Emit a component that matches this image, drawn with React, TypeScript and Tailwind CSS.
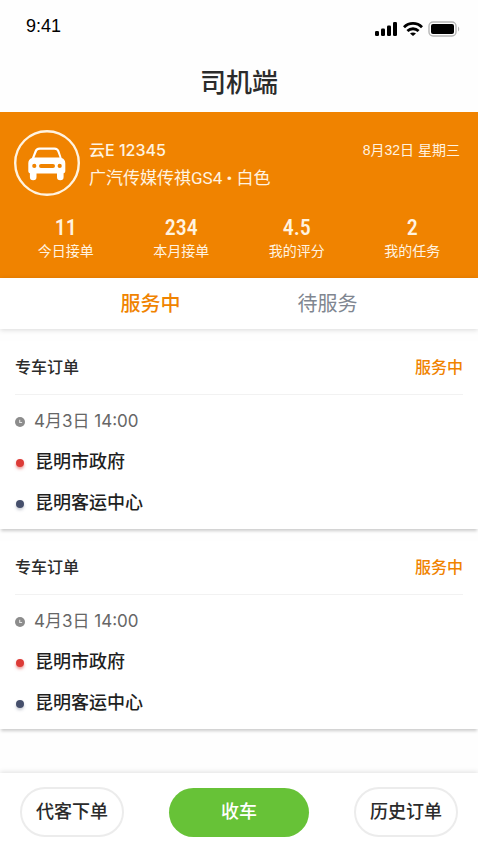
import { useState } from 'react'

const stats = [
  { value: '11', label: '今日接单' },
  { value: '234', label: '本月接单' },
  { value: '4.5', label: '我的评分' },
  { value: '2', label: '我的任务' },
]

const orders = [
  { id: 1, type: '专车订单', status: '服务中', time: '4月3日 14:00', from: '昆明市政府', to: '昆明客运中心' },
  { id: 2, type: '专车订单', status: '服务中', time: '4月3日 14:00', from: '昆明市政府', to: '昆明客运中心' },
]

const tabs = ['服务中', '待服务']

function StatusBar() {
  return (
    <div className="flex h-13 items-center justify-between pr-[18px] pl-[26px] text-black">
      <span className="text-[18px] leading-6">9:41</span>
      <div className="flex items-center gap-[5px] pt-[6px]">
        <svg width="23" height="14" viewBox="0 0 23 14" fill="currentColor" aria-hidden="true">
          <rect x="0" y="9" width="4" height="5" rx="1.2" />
          <rect x="6" y="6.5" width="4" height="7.5" rx="1.2" />
          <rect x="12" y="3.5" width="4" height="10.5" rx="1.2" />
          <rect x="18" y="0" width="4" height="14" rx="1.2" />
        </svg>
        <svg width="20" height="14" viewBox="0 0 20 14" fill="none" stroke="currentColor" strokeWidth="2.8" aria-hidden="true">
          <path d="M1 5.200C6 .2 14 .2 19 5.200" />
          <path d="M4.400 9c3.200-3 8-3 11.200 0" />
          <path d="M7 11.500c1.800-1.500 4.200-1.500 6 0L10 14z" fill="currentColor" stroke="none" />
        </svg>
        <svg width="32" height="16" viewBox="0 0 32 16" fill="none" aria-hidden="true">
          <rect x="1" y="1" width="27" height="14" rx="4" stroke="#b5b5b5" strokeWidth="1.4" />
          <rect x="3" y="3" width="23" height="10" rx="2" fill="currentColor" />
          <path d="M30 5.500c1.600.8 1.600 4.200 0 5z" fill="#b5b5b5" />
        </svg>
      </div>
    </div>
  )
}

function CarIcon() {
  return (
    <svg width="66" height="66" viewBox="0 0 66 66" className="shrink-0" aria-hidden="true">
      <circle cx="33" cy="33" r="31.8" fill="none" stroke="#fff3e0" strokeWidth="2.4" />
      <path
        fill="#fff"
        fillRule="evenodd"
        d="M25.500 17.500h15c2.600 0 4.100 1.200 4.900 3.600L47.700 28c2.300.9 3.600 2.700 3.600 5.200V41c0 1.200-.6 2-1.700 2.200V47c0 2.200-1 3.300-3.300 3.300s-3.300-1.100-3.300-3.300v-3.500H22.500V47c0 2.200-1 3.300-3.300 3.300s-3.300-1.100-3.300-3.300v-3.800c-1-.2-1.600-1-1.600-2.200v-7.800c0-2.500 1.300-4.300 3.600-5.200l2.700-6.900c.8-2.400 2.300-3.600 4.900-3.600zm.4 2.300c-1.700 0-2.600.7-3.200 2.200L20.400 27.500h25.200L43.500 22c-.5-1.500-1.400-2.200-3.100-2.200zM20.300 33.800a2.100 2.100 0 1 0 0 4.200 2.100 2.100 0 0 0 0-4.200zm25.400 0a2.100 2.100 0 1 0 0 4.200 2.100 2.100 0 0 0 0-4.200zM27 33.900a2 2 0 0 0 0 4h12a2 2 0 0 0 0-4z"
      />
    </svg>
  )
}

function OrderCard({ order }: { order: (typeof orders)[number] }) {
  return (
    <article className="bg-white pb-[5px] shadow-[0_3px_3px_-1px_rgba(0,0,0,0.2)]">
      <header className="mx-[15px] flex h-[54px] items-center justify-between border-b border-[#f2f2f2] font-medium">
        <h2 className="text-[#2b2b2b]">{order.type}</h2>
        <span className="text-[#f08300]">{order.status}</span>
      </header>
      <ul className="px-[15px] pt-[6px] text-[18px] text-[#1f1f1f]">
        <li className="flex h-[41px] items-center gap-[9px] font-['Inter','Noto_Sans_CJK_SC',sans-serif] text-[17px] text-[#666]">
          <svg width="10" height="10" viewBox="0 0 10 10" aria-hidden="true">
            <circle cx="5" cy="5" r="5" fill="#8c8c8c" />
            <path d="M4.700 2.700v2.800h2.400" fill="none" stroke="#e4e4e4" strokeWidth="1.100" />
          </svg>
          {order.time}
        </li>
        <li className="flex h-[41px] items-center gap-[11px] font-medium">
          <span className="ml-px size-2 rounded-full bg-[#dc3a36] shadow-[0_2px_3px_rgba(220,58,54,0.5)]" />
          {order.from}
        </li>
        <li className="flex h-[41px] items-center gap-[11px] font-medium">
          <span className="ml-px size-2 rounded-full bg-[#454f6b] shadow-[0_2px_3px_rgba(69,79,107,0.3)]" />
          {order.to}
        </li>
      </ul>
    </article>
  )
}

export default function App() {
  const [tab, setTab] = useState(tabs[0])
  return (
    <div className="flex min-h-screen flex-col bg-[#fefefe] font-['Liberation_Sans','Noto_Sans_CJK_SC',sans-serif]">
      <StatusBar />
      <h1 className="flex h-[60px] items-center justify-center pt-[3px] text-[26px] font-medium text-[#2b2b2b]">司机端</h1>

      <section className="bg-[#f08300] pt-[18px] pb-[17px] text-[#fff3e0]">
        <div className="flex pr-[18px] pl-[14px]">
          <CarIcon />
          <div className="ml-[9px] flex-1 pt-[6px] leading-7">
            <p className="font-['Inter','Noto_Sans_CJK_SC',sans-serif] text-[16px] font-medium">云E 12345</p>
            <p className="font-['Roboto','Noto_Sans_CJK_SC',sans-serif] text-[17px]">广汽传媒传祺GS4 • 白色</p>
          </div>
          <time className="pt-[6px] text-[14px] leading-7">8月32日 星期三</time>
        </div>
        <dl className="mt-[19px] grid grid-cols-4 px-2 text-center">
          {stats.map((s) => (
            <div key={s.label} className="flex flex-col-reverse">
              <dt className="text-[14px] leading-5">{s.label}</dt>
              <dd className="font-['Roboto_Condensed','Roboto',sans-serif] text-[22px] leading-[26px] font-medium">{s.value}</dd>
            </div>
          ))}
        </dl>
      </section>

      <nav className="grid h-[51px] grid-cols-2 bg-white px-[62px] pt-px shadow-[0_1px_5px_rgba(0,0,0,0.15)]">
        {tabs.map((t) => (
          <button
            key={t}
            type="button"
            onClick={() => setTab(t)}
            className={t === tab ? 'text-[20px] font-medium text-[#f08300]' : 'text-[20px] text-[#808690]'}
          >
            {t}
          </button>
        ))}
      </nav>

      <main className="flex flex-col gap-3 pt-3 pb-[42px]">
        {orders.map((o) => (
          <OrderCard key={o.id} order={o} />
        ))}
      </main>

      <footer className="mt-auto flex items-center justify-between bg-white px-5 pt-[14px] pb-[13px] text-[18px] font-medium text-[#2b2b2b] shadow-[0_-1px_5px_rgba(0,0,0,0.12)]">
        <button type="button" className="h-[50px] w-[104px] rounded-full border-2 border-[#ececec]">代客下单</button>
        <button type="button" className="h-[49px] w-[140px] rounded-full bg-[#67c237] text-white">收车</button>
        <button type="button" className="h-[50px] w-[104px] rounded-full border-2 border-[#ececec]">历史订单</button>
      </footer>
    </div>
  )
}
